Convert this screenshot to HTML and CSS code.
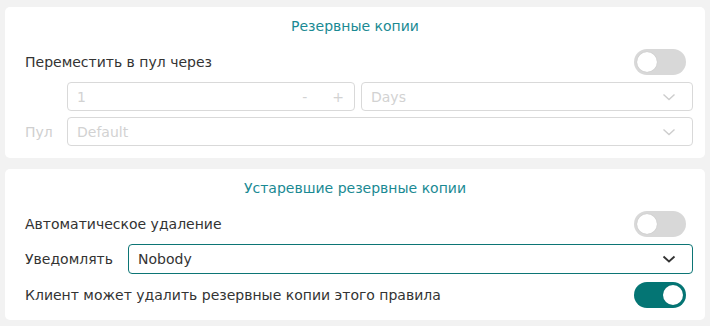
FILE: index.html
```html
<!DOCTYPE html>
<html lang="ru">
<head>
<meta charset="utf-8">
<link rel="stylesheet" href="styles.css">
</head>
<body>
<div class="page">
  <section class="card">
    <h2 class="card-title">Резервные копии</h2>
    <div class="row row-toggle">
      <span class="label">Переместить в пул через</span>
      <span class="toggle"><span class="knob"></span></span>
    </div>
    <div class="field-grid">
      <span class="side-label"></span>
      <div class="fields">
        <div class="input disabled number">
          <span class="value">1</span>
          <span class="steppers"><span>-</span><span>+</span></span>
        </div>
        <div class="input disabled select">
          <span class="value">Days</span>
          <svg class="chev" width="14" height="8" viewBox="0 0 14 8"><path d="M1.5 1.5 L7 6.5 L12.5 1.5" fill="none" stroke="currentColor" stroke-width="1.4"/></svg>
        </div>
      </div>
      <span class="side-label disabled-text">Пул</span>
      <div class="fields">
        <div class="input disabled select wide">
          <span class="value">Default</span>
          <svg class="chev" width="14" height="8" viewBox="0 0 14 8"><path d="M1.5 1.5 L7 6.5 L12.5 1.5" fill="none" stroke="currentColor" stroke-width="1.4"/></svg>
        </div>
      </div>
    </div>
  </section>
  <section class="card">
    <h2 class="card-title">Устаревшие резервные копии</h2>
    <div class="row row-toggle">
      <span class="label">Автоматическое удаление</span>
      <span class="toggle"><span class="knob"></span></span>
    </div>
    <div class="row row-select">
      <span class="label">Уведомлять</span>
      <div class="input select active">
        <span class="value">Nobody</span>
        <svg class="chev" width="14" height="8" viewBox="0 0 14 8"><path d="M1.5 1.5 L7 6.5 L12.5 1.5" fill="none" stroke="currentColor" stroke-width="1.8"/></svg>
      </div>
    </div>
    <div class="row row-toggle">
      <span class="label">Клиент может удалить резервные копии этого правила</span>
      <span class="toggle on"><span class="knob"></span></span>
    </div>
  </section>
</div>
</body>
</html>
```
FILE: styles.css
```css
* { box-sizing: border-box; }
html, body { margin: 0; padding: 0; }
body {
  background: #f2f2f2;
  font-family: "DejaVu Sans", "Liberation Sans", sans-serif;
  font-size: 14px;
  color: #333;
}
.page {
  padding: 7px 5px 0 5px;
  display: flex;
  flex-direction: column;
  gap: 11px;
}
.card {
  background: #fff;
  border-radius: 5px;
  padding: 11px 12px 12px 12px;
  height: 151px;
}
.card-title {
  margin: 0;
  font-size: 14px;
  font-weight: normal;
  color: #1a8a93;
  text-align: center;
  line-height: 16px;
}
.row {
  display: flex;
  align-items: center;
  justify-content: space-between;
  padding: 0 7px 0 8px;
}
.row-toggle { height: 26px; }
.card .card-title + .row { margin-top: 15px; }
.label { line-height: 18px; }
.toggle {
  width: 52px;
  height: 26px;
  border-radius: 13px;
  background: #d8d8d8;
  position: relative;
  flex: none;
}
.knob {
  position: absolute;
  top: 3px;
  left: 3px;
  width: 20px;
  height: 20px;
  border-radius: 50%;
  background: #fff;
  box-shadow: 0 0 1px rgba(0,0,0,0.2);
}
.toggle.on { background: #047574; }
.toggle.on .knob { left: auto; right: 3px; }

.field-grid {
  display: grid;
  grid-template-columns: 42px 1fr;
  row-gap: 6px;
  margin-top: 7px;
  padding-left: 8px;
  align-items: center;
}
.side-label { font-size: 14px; }
.disabled-text { color: #cfcfcf; }
.fields {
  display: flex;
  gap: 6px;
}
.input {
  height: 29px;
  border: 1px solid #d9d9d9;
  border-radius: 4px;
  display: flex;
  align-items: center;
  justify-content: space-between;
  padding: 0 16px 0 9px;
  background: #fff;
}
.input.disabled { color: #d2d2d2; }
.input.number { width: 288px; padding-right: 10px; }
.input.select { flex: 1; }
.steppers { display: flex; gap: 25px; }
.chev { color: #cdcdcd; display: block; }
.input.active {
  height: 30px;
  border-color: #0c7575;
  color: #333;
  flex: none;
  width: 565px;
}
.input.active .chev { color: #333; }
.row-select { margin-top: 7px; padding-right: 0; }
.row-select + .row { margin-top: 8px; }
```
